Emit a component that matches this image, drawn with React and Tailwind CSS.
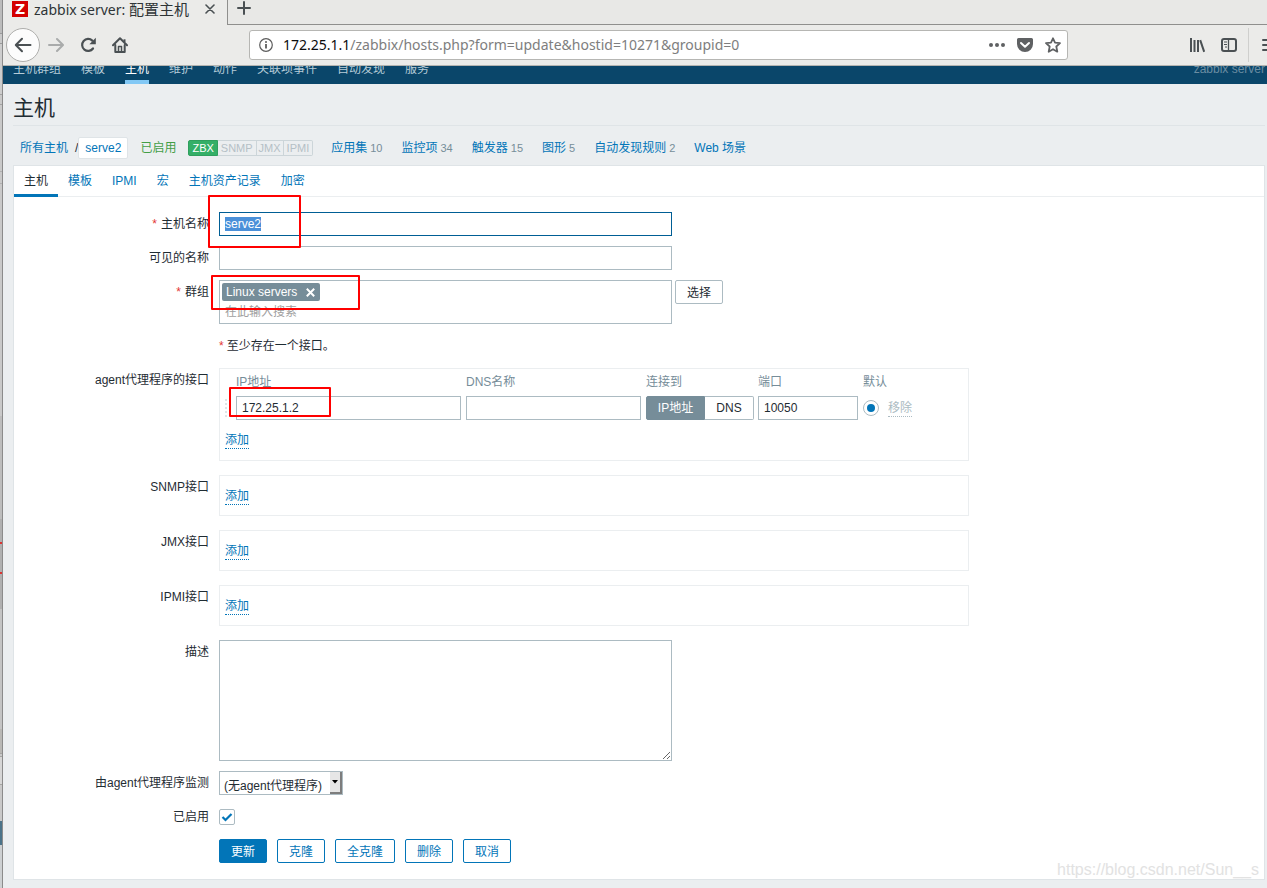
import React, { useEffect, useRef } from 'react';

const NAV_ITEMS = ['主机群组', '模板', '主机', '维护', '动作', '关联项事件', '自动发现', '服务'];

const HOST_LINKS = [
  { label: '应用集', count: 10 },
  { label: '监控项', count: 34 },
  { label: '触发器', count: 15 },
  { label: '图形', count: 5 },
  { label: '自动发现规则', count: 2 },
  { label: 'Web 场景' },
];

const FORM_TABS = ['主机', '模板', 'IPMI', '宏', '主机资产记录', '加密'];

const EMPTY_INTERFACES = ['SNMP接口', 'JMX接口', 'IPMI接口'];

const FIELD = 'h-[24px] border border-[#acbbc2] bg-white px-[5px] leading-[14px] text-[#1f2c33] outline-none';
const BUTTON = 'h-[24px] rounded-[2px] border px-[11px] pt-[2px] leading-[20px]';

// Sliver of the desktop window that sits behind the browser
function WindowEdge() {
  return (
    <div className="flex w-[3px] shrink-0 flex-col border-r border-[#8b8b8b] bg-[#c9c9c9]" aria-hidden="true">
      <div className="h-[33px] bg-[#bcbcbc]"></div>
      <div className="h-[11px] border-y border-[#9a9a9a]"></div>
      <div className="h-[50px] bg-[#cdcdcd]"></div>
      <div className="h-[11px] border-y border-[#a2a2a2]"></div>
      <div className="h-[66px]"></div>
      <div className="h-[13px] border-y border-[#b0b0b0]"></div>
      <div className="h-[232px]"></div>
      <div className="h-[103px] bg-[#bdbdbd]"></div>
      <div className="h-[23px] bg-[#b0b0b0]"></div>
      <div className="h-[2px] bg-[#d33]"></div>
      <div className="h-[28px] bg-[#b0b0b0]"></div>
      <div className="h-[2px] bg-[#d33]"></div>
      <div className="h-[35px] bg-[#b0b0b0]"></div>
      <div className="h-[120px] bg-[#c4c4c4]"></div>
      <div className="h-[24px] bg-[#b9b8b5]"></div>
      <div className="h-[4px] border-y border-[#a5a5a2]"></div>
      <div className="h-[28px] border-b border-[#a5a5a2] bg-[#d6d6d6]"></div>
      <div className="h-[36px]"></div>
      <div className="h-[24px] bg-[#4b7389]"></div>
      <div className="flex-1 bg-[#cdd0d2]"></div>
    </div>
  );
}

function BrowserTabs() {
  return (
    <div className="flex h-[25px] bg-[#e8e8e6] text-[14px] text-[#2e3436]">
      <div className="w-[225px] border-r border-[#8f8f8d] bg-[#ebebe9] pl-[9px]">
        <div className="flex h-[18px] items-center">
          <span className="flex size-[16px] items-center justify-center bg-[#d40000] font-['DejaVu_Sans'] text-[14px] font-bold leading-[16px] text-white">Z</span>
          <span className="ml-[6px] flex-1 whitespace-nowrap leading-[18px]">
            zabbix server: <span className="text-[15px]">配置主机</span>
          </span>
          <button type="button" aria-label="关闭标签页" className="mr-[12px]">
            <svg width="10" height="10" viewBox="0 0 10 10" fill="none" stroke="#4a5053" strokeWidth="1.6" strokeLinecap="round">
              <path d="M1 1l8 8M9 1l-8 8" />
            </svg>
          </button>
        </div>
      </div>
      <div className="flex-1 border-b border-[#8f8f8d] pl-[9px] pt-px">
        <button type="button" aria-label="新建标签页" className="block">
          <svg width="14" height="14" viewBox="0 0 14 14" fill="none" stroke="#4a5053" strokeWidth="2" strokeLinecap="round">
            <path d="M7 1v12M1 7h12" />
          </svg>
        </button>
      </div>
    </div>
  );
}

function BrowserToolbar() {
  return (
    <div className="flex h-[41px] items-center overflow-hidden border-b border-[#b4b4b1] bg-[#ebebe9] pl-[3px]">
      <button type="button" aria-label="后退" className="flex size-[34px] shrink-0 items-center justify-center rounded-full border border-[#aeaeac] bg-[#fcfcfc]">
        <svg width="18" height="16" viewBox="0 0 18 16" fill="none" stroke="#4a5053" strokeWidth="2" strokeLinecap="round" strokeLinejoin="round">
          <path d="M16.500 8H2M8 1.800L1.800 8L8 14.200" />
        </svg>
      </button>
      <button type="button" aria-label="前进" className="ml-[8px] shrink-0">
        <svg width="16" height="16" viewBox="0 0 16 16" fill="none" stroke="#a9abab" strokeWidth="2" strokeLinecap="round" strokeLinejoin="round">
          <path d="M1 8h13.500M9 2l6 6l-6 6" />
        </svg>
      </button>
      <button type="button" aria-label="重新载入" className="ml-[16px] shrink-0">
        <svg width="16" height="16" viewBox="0 0 16 16" fill="none" stroke="#4a5053" strokeWidth="2.200">
          <path d="M13 11.500A6 6 0 1 1 12.300 3.600" strokeLinecap="round" />
          <path d="M15.800 0.800V7.200H9.400Z" fill="#4a5053" stroke="none" />
        </svg>
      </button>
      <button type="button" aria-label="主页" className="ml-[16px] shrink-0">
        <svg width="16" height="16" viewBox="0 0 16 16" fill="none" stroke="#4a5053" strokeWidth="2" strokeLinecap="round" strokeLinejoin="round">
          <path d="M1 8.300L8 1.300L15 8.300" />
          <path d="M3.300 8V15H12.700V8" />
          <path d="M6.500 15V9.500H9.500V15" strokeWidth="1.500" />
          <path d="M12.500 2.300V5" strokeLinecap="butt" />
        </svg>
      </button>

      <div className="ml-[121px] flex h-[30px] min-w-0 flex-1 items-center rounded-[3px] border border-[#b6b6b3] bg-white pl-[9px] pr-[6px]">
        <svg width="14" height="14" viewBox="0 0 14 14" fill="none" stroke="#5c5c5c" className="shrink-0">
          <circle cx="7" cy="7" r="6.300" strokeWidth="1.200" />
          <path d="M7 6v4.500" strokeWidth="1.800" />
          <circle cx="7" cy="3.900" r="1" fill="#5c5c5c" stroke="none" />
        </svg>
        <div role="textbox" aria-label="地址" className="ml-[10px] min-w-0 flex-1 truncate text-[14px] leading-[20px] text-[#7e7e7e]">
          <span className="text-[#0c0c0d]">172.25.1.1</span>/zabbix/hosts.php?form=update&amp;hostid=10271&amp;groupid=0
        </div>
        <button type="button" aria-label="页面操作" className="shrink-0">
          <svg width="16" height="16" viewBox="0 0 16 16" fill="#5f6163">
            <circle cx="2" cy="8" r="2" />
            <circle cx="8" cy="8" r="2" />
            <circle cx="14" cy="8" r="2" />
          </svg>
        </button>
        <button type="button" aria-label="保存到 Pocket" className="ml-[12px] shrink-0">
          <svg width="16" height="16" viewBox="0 0 16 16">
            <path d="M1.500 1H14.500A1.500 1.500 0 0 1 16 2.500V7A8 8 0 0 1 0 7V2.500A1.500 1.500 0 0 1 1.500 1Z" fill="#5f6163" />
            <path d="M4 6L8 9.800L12 6" fill="none" stroke="#fff" strokeWidth="2" strokeLinecap="round" strokeLinejoin="round" />
          </svg>
        </button>
        <button type="button" aria-label="收藏" className="ml-[12px] shrink-0">
          <svg width="16" height="16" viewBox="0 0 16 16" fill="none" stroke="#5f6163" strokeWidth="1.800" strokeLinejoin="round">
            <path d="M8 1.300L10 5.700L15 6.200L11.300 9.500L12.300 14.700L8 12.200L3.700 14.700L4.700 9.500L1 6.200L6 5.700Z" />
          </svg>
        </button>
      </div>

      <button type="button" aria-label="我的足迹" className="ml-[121px] shrink-0">
        <svg width="16" height="16" viewBox="0 0 16 16" fill="none" stroke="#4a5053" strokeWidth="2">
          <path d="M2 1v14M5.500 3v12M9 3v12" />
          <path d="M11.200 3.200L15.200 14.800" />
        </svg>
      </button>
      <button type="button" aria-label="侧栏" className="ml-[16px] shrink-0">
        <svg width="16" height="16" viewBox="0 0 16 16" fill="none" stroke="#4a5053">
          <rect x="1" y="2" width="14" height="12" rx="2" strokeWidth="2" />
          <path d="M7.500 2v12" strokeWidth="1.300" />
          <path d="M3 5h3M3 7.500h3M4 10h2" strokeWidth="1" />
        </svg>
      </button>
      <div className="ml-[11px] h-[34px] w-px shrink-0 bg-[#cfcfcd]"></div>
      <button type="button" aria-label="菜单" className="ml-[13px] w-[5px] shrink-0 overflow-hidden">
        <svg width="16" height="14" viewBox="0 0 16 14" stroke="#4a5053" strokeWidth="2" strokeLinecap="round">
          <path d="M1 2h14M1 7h14M1 12h14" />
        </svg>
      </button>
    </div>
  );
}

function MainNav() {
  return (
    <nav className="flex h-[18px] items-end justify-between overflow-hidden bg-[#0a466a] pl-[10px] pr-[2px]">
      <div className="flex gap-[20px]">
        {NAV_ITEMS.map((item) => (
          <a
            key={item}
            href="#"
            className={
              item === '主机'
                ? 'border-b-4 border-[#82c8f5] pb-[3px] leading-[16px] text-white'
                : 'border-b-4 border-transparent pb-[3px] leading-[16px] text-[#b6ccd8]'
            }
          >
            {item}
          </a>
        ))}
      </div>
      <span className="border-b-4 border-transparent pb-[3px] leading-[16px] text-[#6b8da2]">zabbix server</span>
    </nav>
  );
}

function HostSummary() {
  return (
    <div className="flex h-[39px] items-center whitespace-nowrap pl-[7px] pt-[5px] leading-[16px] text-[#0275b8]">
      <a href="#">所有主机</a>
      <span className="ml-[7px] text-[#1f2c33]">/</span>
      <a href="#" className="rounded-[2px] border border-[#dfe4e7] bg-white px-[6px] py-[2px]">serve2</a>
      <a href="#" className="ml-[12px] text-[#429e47]">已启用</a>
      <div className="ml-[12px] flex text-[11px] leading-[14px] text-[#b5c0c6]">
        <span className="rounded-l-[2px] border border-[#2f9f5e] bg-[#34af67] px-[3px] text-white">ZBX</span>
        <span className="border-y border-r border-[#ccd5d9] px-[3px]">SNMP</span>
        <span className="border-y border-r border-[#ccd5d9] px-[2px]">JMX</span>
        <span className="rounded-r-[2px] border-y border-r border-[#ccd5d9] px-[3px]">IPMI</span>
      </div>
      <div className="ml-[18px] flex gap-[19px]">
        {HOST_LINKS.map(({ label, count }) => (
          <span key={label} className="flex items-baseline gap-[3px]">
            <a href="#">{label}</a>
            {count && <sup className="top-0 text-[11px] leading-[16px] text-[#768d99]">{count}</sup>}
          </span>
        ))}
      </div>
    </div>
  );
}

function FormRow({ label, htmlFor, required, children }) {
  return (
    <>
      <label htmlFor={htmlFor} className="text-right leading-[24px]">
        {required && <span className="mr-[4px] text-[#e33734]">*</span>}
        {label}
      </label>
      <div>{children}</div>
    </>
  );
}

function AddLink() {
  return (
    <a href="#" className="block w-fit border-b border-dotted border-[#0275b8] leading-[16px] text-[#0275b8]">添加</a>
  );
}

function AgentInterfaces() {
  return (
    <fieldset className="mb-[4px] w-[750px] border border-[#ebeef0] px-[5px] pb-[11px]">
      <table className="w-full table-fixed border-collapse">
        <colgroup>
          <col className="w-[11px]" />
          <col className="w-[230px]" />
          <col className="w-[180px]" />
          <col className="w-[112px]" />
          <col className="w-[105px]" />
          <col className="w-[25px]" />
          <col />
        </colgroup>
        <thead>
          <tr className="h-[27px] whitespace-nowrap text-left text-[#768d99]">
            <th className="p-0"></th>
            <th className="p-0 pb-px font-normal">IP地址</th>
            <th className="p-0 pb-px font-normal">DNS名称</th>
            <th className="p-0 pb-px font-normal">连接到</th>
            <th className="p-0 pb-px font-normal">端口</th>
            <th colSpan={2} className="p-0 pb-px font-normal">默认</th>
          </tr>
        </thead>
        <tbody>
          <tr className="h-[24px]">
            <td className="p-0">
              <svg width="4" height="18" viewBox="0 0 4 18" fill="#dfe4e7">
                <path d="M0 0h2v2H0zM0 4h2v2H0zM0 8h2v2H0zM0 12h2v2H0zM0 16h2v2H0z" />
              </svg>
            </td>
            <td className="p-0 pr-[5px]">
              <div className="relative">
                <input aria-label="IP地址" defaultValue="172.25.1.2" className={`${FIELD} block w-full`} />
                <div className="pointer-events-none absolute -left-[7px] -top-[9px] h-[30px] w-[102px] rounded-[1px] border-2 border-[#f00]"></div>
              </div>
            </td>
            <td className="p-0 pr-[5px]">
              <input aria-label="DNS名称" className={`${FIELD} block w-full`} />
            </td>
            <td className="p-0 pr-[4px]">
              <div className="flex h-[24px] leading-[22px]">
                <button type="button" className="w-[59px] rounded-l-[2px] border border-[#768d99] bg-[#768d99] text-white">IP地址</button>
                <button type="button" className="flex-1 rounded-r-[2px] border border-l-0 border-[#acbbc2] bg-white text-[#1f2c33]">DNS</button>
              </div>
            </td>
            <td className="p-0 pr-[5px]">
              <input aria-label="端口" defaultValue="10050" className={`${FIELD} block w-full`} />
            </td>
            <td className="p-0">
              <input
                type="radio"
                name="mainif"
                aria-label="默认"
                defaultChecked
                className="grid size-[16px] appearance-none place-items-center rounded-full border border-[#acbbc2] bg-white before:size-[8px] before:rounded-full before:bg-[#0275b8] before:content-['']"
              />
            </td>
            <td className="p-0">
              <button type="button" disabled className="block border-b border-dotted border-[#acbbc2] leading-[16px] text-[#acbbc2]">移除</button>
            </td>
          </tr>
        </tbody>
      </table>
      <div className="pt-[12px]">
        <AddLink />
      </div>
    </fieldset>
  );
}

function HostForm() {
  const nameRef = useRef(null);

  useEffect(() => {
    nameRef.current.focus();
    nameRef.current.select();
  }, []);

  return (
    <form className="grid grid-cols-[195px_1fr] gap-x-[10px] gap-y-[10px] pb-[16px] pt-[15px]">
      <FormRow label="主机名称" htmlFor="host" required>
        <div className="relative w-[453px]">
          <input
            id="host"
            ref={nameRef}
            defaultValue="serve2"
            className="block h-[24px] w-full border border-[#005e95] bg-white px-[5px] leading-[14px] outline-none selection:bg-[#4a90d9] selection:text-white"
          />
          <div className="pointer-events-none absolute -left-[11px] -top-[17px] h-[53px] w-[93px] rounded-[1px] border-2 border-[#f00]"></div>
        </div>
      </FormRow>

      <FormRow label="可见的名称" htmlFor="visiblename">
        <input id="visiblename" className={`${FIELD} block w-[453px]`} />
      </FormRow>

      <FormRow label="群组" htmlFor="groups" required>
        <div className="flex items-start gap-[3px]">
          <div className="relative h-[44px] w-[453px] border border-[#acbbc2] bg-white">
            <div className="p-[2px] pb-0">
              <span className="flex h-[18px] w-[98px] items-center justify-between rounded-[2px] bg-[#768d99] pl-[4px] pr-[5px] text-white">
                Linux servers
                <button type="button" aria-label="移除 Linux servers">
                  <svg width="9" height="9" viewBox="0 0 9 9" fill="none" stroke="#fff" strokeWidth="2">
                    <path d="M0.800 0.800l7.400 7.400M8.200 0.800l-7.400 7.400" />
                  </svg>
                </button>
              </span>
            </div>
            <input id="groups" placeholder="在此输入搜索" className="block h-[22px] w-full px-[5px] leading-[16px] outline-none placeholder:text-[#a0a0a0]" />
            <div className="pointer-events-none absolute -left-[9px] -top-[6px] h-[35px] w-[149px] rounded-[1px] border-2 border-[#f00]"></div>
          </div>
          <button type="button" className={`${BUTTON} border-[#acbbc2] bg-white text-[#1f2c33]`}>选择</button>
        </div>
      </FormRow>

      <div className="col-start-2 leading-[24px]">
        <span className="mr-[3px] text-[#e33734]">*</span>至少存在一个接口。
      </div>

      <FormRow label="agent代理程序的接口">
        <AgentInterfaces />
      </FormRow>

      {EMPTY_INTERFACES.map((label) => (
        <FormRow key={label} label={label}>
          <fieldset className="mb-[4px] w-[750px] border border-[#ebeef0] px-[5px] pb-[10px] pt-[12px]">
            <AddLink />
          </fieldset>
        </FormRow>
      ))}

      <FormRow label="描述" htmlFor="description">
        <textarea id="description" className="block h-[121px] w-[453px] resize border border-[#acbbc2] bg-white px-[5px] py-[4px] outline-none"></textarea>
      </FormRow>

      <FormRow label="由agent代理程序监测" htmlFor="proxy">
        <div className="relative w-fit">
          <select id="proxy" className="block h-[24px] w-[124px] appearance-none border border-[#acbbc2] bg-white pl-[4px] pt-[5px] leading-[16px] text-[#1f2c33] outline-none">
            <option>(无agent代理程序)</option>
          </select>
          <span className="pointer-events-none absolute bottom-px right-px top-px flex w-[12px] items-center justify-center border-b-2 border-r-2 border-[#7d7d7d] bg-[#e6e6e6]">
            <svg width="6" height="4" viewBox="0 0 6 4" fill="#000">
              <path d="M0 0h6L3 3.500Z" />
            </svg>
          </span>
        </div>
      </FormRow>

      <FormRow label="已启用" htmlFor="status">
        <div className="flex h-[24px] items-center">
          <div className="relative size-[16px]">
            <input id="status" type="checkbox" defaultChecked className="block size-[16px] appearance-none rounded-[2px] border border-[#acbbc2] bg-white" />
            <svg width="16" height="16" viewBox="0 0 16 16" fill="none" stroke="#0275b8" strokeWidth="2.200" className="pointer-events-none absolute inset-0">
              <path d="M3.500 8L6.500 11L12.500 5" />
            </svg>
          </div>
        </div>
      </FormRow>

      <div className="col-start-2 flex gap-[10px]">
        <button type="submit" className={`${BUTTON} border-[#0275b8] bg-[#0275b8] text-white`}>更新</button>
        {['克隆', '全克隆', '删除', '取消'].map((action) => (
          <button key={action} type="button" className={`${BUTTON} border-[#0275b8] bg-white text-[#0275b8]`}>
            {action}
          </button>
        ))}
      </div>
    </form>
  );
}

export default function App() {
  return (
    <div className="flex min-h-screen bg-[#ebeef0]">
      <WindowEdge />
      <div className="flex min-w-0 flex-1 flex-col">
        <header className="font-['Noto_Sans','Noto_Sans_CJK_SC',sans-serif]">
          <BrowserTabs />
          <BrowserToolbar />
        </header>

        <div className="relative flex-1 font-['Liberation_Sans','Noto_Sans_CJK_SC',sans-serif] text-[12px] text-[#1f2c33]">
          <MainNav />
          <main className="pl-[10px] pr-[2px]">
            <h1 className="border-b border-[#dfe4e7] pb-[5px] pt-[12px] text-[21px] leading-[24px]">主机</h1>
            <HostSummary />
            <section className="border border-[#dfe4e7] bg-white">
              <div className="flex h-[31px] border-b border-[#ebeef0] leading-[30px]">
                {FORM_TABS.map((tab, index) => (
                  <a
                    key={tab}
                    href="#"
                    className={
                      index === 0
                        ? 'h-[31px] border-b-3 border-[#0275b8] px-[10px] text-[#1f2c33]'
                        : 'h-[31px] px-[10px] text-[#0275b8]'
                    }
                  >
                    {tab}
                  </a>
                ))}
              </div>
              <HostForm />
            </section>
          </main>
          <div className="pointer-events-none absolute bottom-[9px] right-[8px] text-[16px] leading-[18px] text-[#e2e2e2]">
            https://blog.csdn.net/Sun__s
          </div>
        </div>
      </div>
    </div>
  );
}
